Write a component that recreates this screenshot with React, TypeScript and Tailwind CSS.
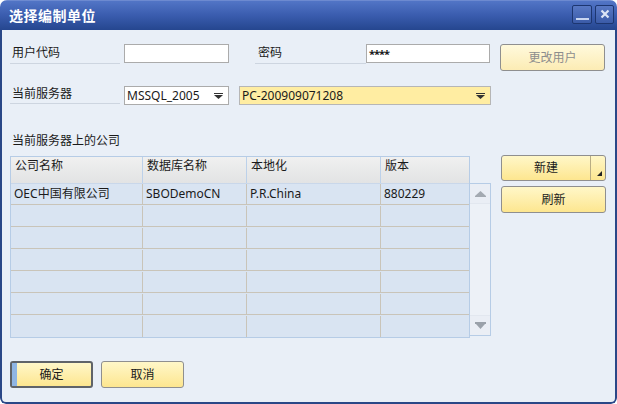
import React from 'react'

const font = { fontFamily: '"Noto Sans", "Noto Sans CJK SC", sans-serif' }

function DownArrow({ color = '#333' }: { color?: string }) {
    return (
        <svg width="9" height="6" viewBox="0 0 9 6">
            <rect x="0" y="0" width="9" height="1" fill={color} />
            <polygon points="0,2 9,2 4.5,6" fill={color} />
        </svg>
    )
}

function Button({ label, disabled, primary, className = '' }: { label: string; disabled?: boolean; primary?: boolean; className?: string }) {
    return (
        <div
            className={`relative flex items-center justify-center rounded-[3px] text-[12px] ${
                primary ? 'border-2 border-[#5f6368]' : 'border border-[#8f8f8f]'
            } ${
                disabled
                    ? 'bg-gradient-to-b from-[#fff9dc] to-[#fcecb4] text-[#8d8d8d]'
                    : 'bg-gradient-to-b from-[#fff7c8] to-[#fde68f] text-[#1a1a1a]'
            } ${className}`}
        >
            {primary && <div className="absolute left-0 top-0 bottom-0 w-[5px] bg-[#8fb5e3]" />}
            {label}
        </div>
    )
}

const columns = [
    { title: '公司名称', w: 'w-[132px]' },
    { title: '数据库名称', w: 'w-[104px]' },
    { title: '本地化', w: 'w-[134px]' },
    { title: '版本', w: 'w-[88px]' },
]

const rows = [
    ['OEC中国有限公司', 'SBODemoCN', 'P.R.China', '880229'],
    ['', '', '', ''],
    ['', '', '', ''],
    ['', '', '', ''],
    ['', '', '', ''],
    ['', '', '', ''],
    ['', '', '', ''],
]

export default function App() {
    return (
        <div className="w-[617px] h-[404px] bg-[#e9eff7] text-[#1a1a1a] flex flex-col rounded-t-[7px] rounded-b-[6px] overflow-hidden" style={font}>
            {/* title bar */}
            <div className="h-[30px] shrink-0 flex items-center justify-between pl-[9px] pr-[3px] bg-gradient-to-b from-[#5275c6] via-[#3a5cae] to-[#25468f] border-t border-[#6d8ad0]">
                <span className="text-white text-[14px] font-bold tracking-[0.5px]">选择编制单位</span>
                <div className="flex gap-[3px] mb-[3px]">
                    <div className="w-[20px] h-[19px] rounded-[2px] border border-[#1d3670] bg-gradient-to-b from-[#5878c4] to-[#3b5ba8] flex items-end justify-center pb-[3px]">
                        <div className="w-[13px] h-[2px] bg-[#c9d6f0]" />
                    </div>
                    <div className="w-[19px] h-[19px] rounded-[2px] border border-[#1d3670] bg-gradient-to-b from-[#5878c4] to-[#3b5ba8] flex items-center justify-center">
                        <svg width="10" height="10" viewBox="0 0 10 10">
                            <path d="M1.5 1.5 L8.5 8.5 M8.5 1.5 L1.5 8.5" stroke="#dce5f6" strokeWidth="2.2" />
                        </svg>
                    </div>
                </div>
            </div>

            {/* body */}
            <div className="flex-1 border-x-2 border-b-2 border-[#2a4787] rounded-b-[6px] pl-[8px] pt-[14px]">
                {/* row 1 */}
                <div className="flex items-start">
                    <div className="w-[110px] h-[20px] border-b border-[#cdd5e0] pl-[2px] text-[12px] leading-[18px]">用户代码</div>
                    <div className="ml-[4px] w-[105px] h-[19px] border border-[#ababab] bg-white" />
                    <div className="ml-[26px] w-[111px] h-[20px] border-b border-[#cdd5e0] pl-[3px] text-[12px] leading-[18px]">密码</div>
                    <div className="w-[124px] h-[19px] border border-[#ababab] bg-white pl-[2px] text-[11px] leading-[17px] font-bold tracking-[-1px]">****</div>
                    <Button label="更改用户" disabled className="ml-[10px] w-[105px] h-[27px]" />
                </div>

                {/* row 2 */}
                <div className="flex items-start mt-[15px]">
                    <div className="w-[110px] h-[18px] border-b border-[#cdd5e0] pl-[2px] text-[12px] leading-[16px]">当前服务器</div>
                    <div className="ml-[4px] w-[105px] h-[19px] border border-[#ababab] bg-white flex items-center justify-between pl-[2px] pr-[5px] text-[12px]">
                        <span>MSSQL_2005</span>
                        <DownArrow />
                    </div>
                    <div className="ml-[10px] w-[252px] h-[19px] border border-[#b6b6b6] bg-[#ffeda2] flex items-center justify-between pl-[2px] pr-[5px] text-[12px]">
                        <span>PC-200909071208</span>
                        <DownArrow />
                    </div>
                </div>

                <div className="mt-[28px] h-[16px] pl-[2px] text-[12px] leading-[16px]">当前服务器上的公司</div>

                {/* table + side buttons */}
                <div className="flex items-start mt-[7px]">
                    <div className="flex items-start">
                        <div className="border border-[#b6cce6] bg-[#d9e4f2]">
                            <div className="flex h-[26px] bg-gradient-to-b from-[#f0f0f0] to-[#e2e3e4]">
                                {columns.map((c, i) => (
                                    <div key={i} className={`${c.w} h-full ${i < 3 ? 'border-r border-[#bcd1ea]' : ''} pl-[4px] pt-[1px] text-[12px] leading-[16px]`}>
                                        {c.title}
                                    </div>
                                ))}
                            </div>
                            {rows.map((r, ri) => (
                                <div key={ri} className={`flex h-[22px] ${ri < rows.length - 1 ? 'border-b border-[#c9c4b9]' : ''} border-t ${ri === 0 ? 'border-t-[#c9d7ea]' : 'border-t-transparent'} box-border`}>
                                    {r.map((cell, ci) => (
                                        <div key={ci} className={`${columns[ci].w} h-full ${ci < 3 ? 'border-r border-[#c9c4b9]' : ''} pl-[3px] text-[12px] leading-[19px]`}>
                                            {cell}
                                        </div>
                                    ))}
                                </div>
                            ))}
                        </div>
                        {/* scrollbar */}
                        <div className="mt-[27px] w-[21px] h-[153px] border border-l-0 border-[#b6cce6] bg-[#edf1f7] flex flex-col justify-between items-center">
                            <div className="w-full h-[20px] flex items-center justify-center bg-[#eaeef5] border-b border-[#e2e7ef]">
                                <svg width="11" height="6" viewBox="0 0 11 6"><polygon points="5.5,0 11,5 0,5" fill="#a3a9b1" /><rect x="0" y="5" width="11" height="1" fill="#a3a9b1" /></svg>
                            </div>
                            <div className="w-full h-[20px] flex items-center justify-center bg-[#eaeef5] border-t border-[#e2e7ef]">
                                <svg width="11" height="7" viewBox="0 0 11 7"><rect x="0" y="0" width="11" height="2" fill="#9aa1aa" /><polygon points="1,2 10,2 5.5,7" fill="#9aa1aa" /></svg>
                            </div>
                        </div>
                    </div>

                    <div className="ml-[10px] -mt-[1px] flex flex-col gap-[5px]">
                        <div className="relative w-[105px] h-[26px] rounded-[3px] border border-[#8f8f8f] bg-gradient-to-b from-[#fff7c8] to-[#fde68f] flex">
                            <div className="flex-1 flex items-center justify-center text-[12px]">新建</div>
                            <div className="w-[15px] h-full border-l border-[#b9ad84] relative">
                                <svg className="absolute right-[3px] bottom-[4px]" width="5" height="5" viewBox="0 0 5 5"><polygon points="5,0 5,5 0,5" fill="#222" /></svg>
                            </div>
                        </div>
                        <Button label="刷新" className="w-[105px] h-[27px]" />
                    </div>
                </div>

                {/* bottom buttons */}
                <div className="flex gap-[8px] mt-[23px]">
                    <Button label="确定" primary className="w-[83px] h-[27px]" />
                    <Button label="取消" className="w-[83px] h-[27px]" />
                </div>
            </div>
        </div>
    )
}
